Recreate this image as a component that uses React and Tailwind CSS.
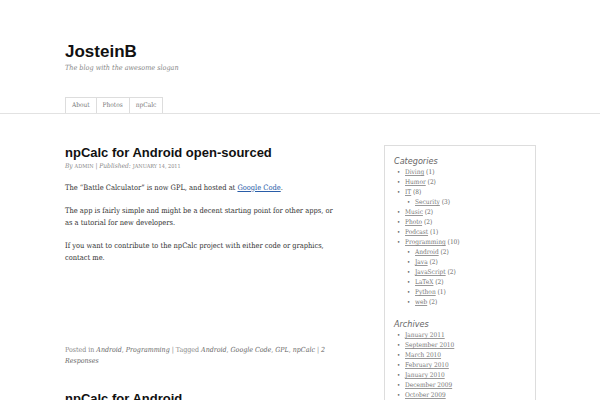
const serif = 'font-["DejaVu_Serif_Condensed","DejaVu_Serif",serif] [font-stretch:condensed]';
const sans = 'font-["Liberation_Sans",Arial,sans-serif]';

const categories = [
  { name: 'Diving', count: 1 },
  { name: 'Humor', count: 2 },
  { name: 'IT', count: 8, children: [{ name: 'Security', count: 3 }] },
  { name: 'Music', count: 2 },
  { name: 'Photo', count: 2 },
  { name: 'Podcast', count: 1 },
  {
    name: 'Programming',
    count: 10,
    children: [
      { name: 'Android', count: 2 },
      { name: 'Java', count: 2 },
      { name: 'JavaScript', count: 2 },
      { name: 'LaTeX', count: 2 },
      { name: 'Python', count: 1 },
      { name: 'web', count: 2 },
    ],
  },
];

const archives = ['January 2011', 'September 2010', 'March 2010', 'February 2010', 'January 2010', 'December 2009', 'October 2009'];

function Item({ children }) {
  return (
    <li className="flex items-start h-[10px]">
      <span className="w-[11px] shrink-0 pl-[3px] text-[6px] leading-[10px]">•</span>
      <span>{children}</span>
    </li>
  );
}

function CatLink({ c }) {
  return (
    <>
      <a className="underline text-[#777] decoration-[#999]">{c.name}</a>
      <span className="text-[#666]"> ({c.count})</span>
    </>
  );
}

export default function App() {
  return (
    <div className={`min-h-[400px] bg-white text-[#333] ${serif}`}>
      <header className="border-b border-[#e2e2e2] pt-[42px]">
        <div className="pl-[65px]">
          <h1 className={`${sans} text-[17px] leading-[20px] font-bold text-[#111]`}>JosteinB</h1>
          <p className="mt-px text-[7.2px] leading-[10px] italic text-[#888]">The blog with the awesome slogan</p>
          <nav className="mt-[24px] flex">
            {['About', 'Photos', 'npCalc'].map((t, i) => (
              <a
                key={t}
                className={`h-[16px] border-t border-r border-[#ddd] px-[6px] text-[6.5px] leading-[15px] text-[#777] ${i === 0 ? 'border-l' : ''}`}
              >
                {t}
              </a>
            ))}
          </nav>
        </div>
      </header>

      <div className="flex pl-[65px] pt-[31px]">
        <main className="w-[269px] mr-[50px]">
          <h2 className={`${sans} text-[13px] leading-[16px] font-bold text-[#111]`}>npCalc for Android open-sourced</h2>
          <p className="mt-[1px] text-[6.6px] leading-[9px] text-[#888]">
            <i>By</i> <span className="text-[5.5px]">ADMIN</span> | <i>Published:</i> <span className="text-[5.5px]">JANUARY 14, 2011</span>
          </p>
          <div className="mt-[11px] space-y-[11px] text-[7.45px] leading-[12px] text-[#333]">
            <p>
              The “Battle Calculator” is now GPL, and hosted at <a className="underline text-[#2a5da8]">Google Code</a>.
            </p>
            <p>The app is fairly simple and might be a decent starting point for other apps, or as a tutorial for new developers.</p>
            <p>If you want to contribute to the npCalc project with either code or graphics, contact me.</p>
          </div>
          <p className="mt-[81px] text-[7px] leading-[11px] text-[#888]">
            Posted in <i className="text-[#666]">Android</i>, <i className="text-[#666]">Programming</i> | Tagged{' '}
            <i className="text-[#666]">Android</i>, <i className="text-[#666]">Google Code</i>, <i className="text-[#666]">GPL</i>,{' '}
            <i className="text-[#666]">npCalc</i> | <i className="text-[#666]">2 Responses</i>
          </p>
          <h2 className={`${sans} mt-[24px] text-[13px] leading-[16px] font-bold text-[#111]`}>npCalc for Android</h2>
        </main>

        <aside className="w-[152px] h-[300px] border border-[#ddd] pl-[9px] pt-[10px] text-[6.5px] leading-[10px] text-[#666]">
          <h3 className="font-['DejaVu_Sans',sans-serif] italic text-[9px] leading-[10px] text-[#666]">Categories</h3>
          <ul className="mt-px">
            {categories.map((c) => (
              <div key={c.name}>
                <Item>
                  <CatLink c={c} />
                </Item>
                {c.children && (
                  <ul className="pl-[10px]">
                    {c.children.map((s) => (
                      <Item key={s.name}>
                        <CatLink c={s} />
                      </Item>
                    ))}
                  </ul>
                )}
              </div>
            ))}
          </ul>
          <h3 className="mt-[12px] font-['DejaVu_Sans',sans-serif] italic text-[9px] leading-[10px] text-[#666]">Archives</h3>
          <ul className="mt-px">
            {archives.map((a) => (
              <Item key={a}>
                <a className="underline text-[#777] decoration-[#999]">{a}</a>
              </Item>
            ))}
          </ul>
        </aside>
      </div>
    </div>
  );
}
